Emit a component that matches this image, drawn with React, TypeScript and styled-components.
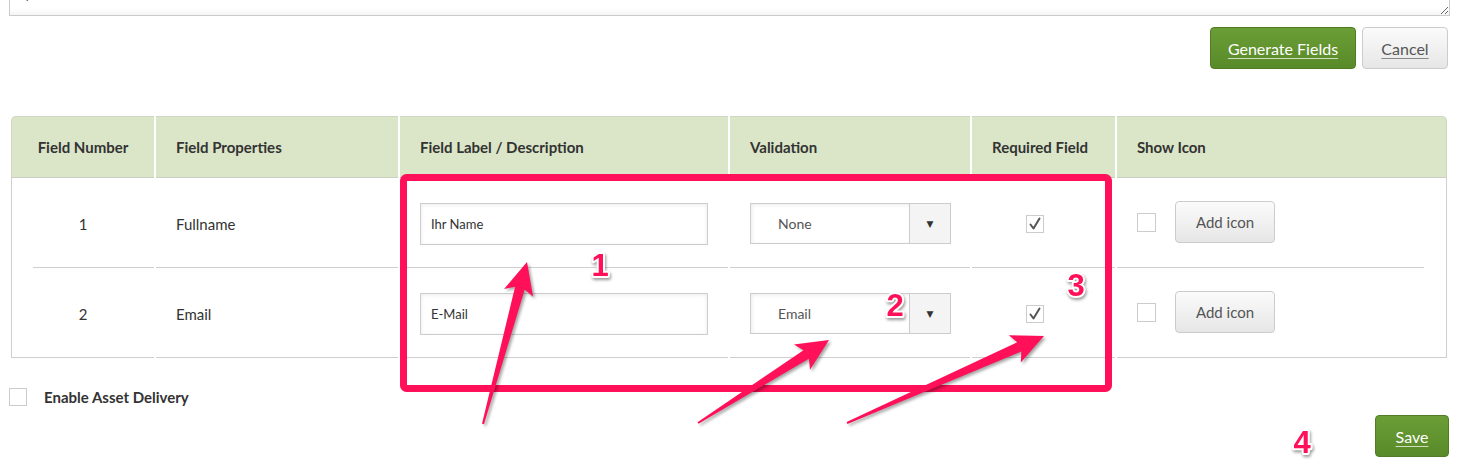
import styled, { createGlobalStyle } from 'styled-components';

/* Styles */
const GlobalStyle = createGlobalStyle`
  body {
    margin: 0;
    background: #fff;
    font-family: Lato, 'Open Sans', sans-serif;
    color: #333;
  }
`;

const Page = styled.div`
  position: relative;
  width: 1461px;
  height: 469px;
  overflow: hidden;
  padding: 0 11px 0 9px;
  box-sizing: border-box;
`;

const Textarea = styled.textarea`
  display: block;
  width: 100%;
  height: 40px;
  margin-top: -24px;
  box-sizing: border-box;
  border: 1px solid #ccc;
  box-shadow: inset 0 -6px 6px -4px rgba(0, 0, 0, 0.06);
  padding: 8px 16px;
  font: 15px/18px Lato, sans-serif;
  color: #333;
  resize: vertical;
  overflow: hidden;
`;

const Actions = styled.div`
  display: flex;
  justify-content: flex-end;
  gap: 6px;
  margin-top: 11px;
  padding-right: 2px;
`;

const PrimaryButton = styled.button<{ $width: number }>`
  width: ${(p) => p.$width}px;
  height: 42px;
  border: 1px solid #4f7c24;
  border-radius: 4px;
  background: linear-gradient(#6b9e36, #588a29);
  color: #fff;
  font: 16px Lato, sans-serif;
  text-decoration: underline;
  text-decoration-color: rgba(255, 255, 255, 0.7);
  text-underline-offset: 3px;
  cursor: pointer;
`;

const DefaultButton = styled.button<{ $width: number; $size?: number }>`
  width: ${(p) => p.$width}px;
  height: 42px;
  border: 1px solid #ccc;
  border-radius: 4px;
  background: linear-gradient(#fbfbfb, #e6e6e6);
  color: #555;
  font: ${(p) => p.$size || 15}px Lato, sans-serif;
  cursor: pointer;
`;

const CancelButton = styled(DefaultButton)`
  text-decoration: underline;
  text-decoration-color: #888;
  text-underline-offset: 3px;
`;

const FieldsTable = styled.div`
  display: grid;
  grid-template-columns: 143px 242px 328px 240px 143px 330px;
  column-gap: 2px;
  margin: 47px 3px 0 2px;
`;

const HeadCell = styled.div<{ $center?: boolean }>`
  height: 62px;
  box-sizing: border-box;
  display: flex;
  align-items: center;
  justify-content: ${(p) => (p.$center ? 'center' : 'flex-start')};
  padding-left: ${(p) => (p.$center ? 0 : 20)}px;
  background: #dbe6c8;
  border-top: 1px solid #cfd6c4;
  border-bottom: 1px solid #c9d0bf;
  font-size: 15px;
  font-weight: 700;
  color: #333;

  &:first-child {
    border-left: 1px solid #cfd6c4;
    border-top-left-radius: 5px;
  }

  &:nth-child(6) {
    border-right: 1px solid #cfd6c4;
    border-top-right-radius: 5px;
  }
`;

const BodyCell = styled.div<{ $center?: boolean; $pad?: number; $inset?: 'left' | 'right' }>`
  height: 90px;
  box-sizing: border-box;
  display: flex;
  align-items: center;
  justify-content: ${(p) => (p.$center ? 'center' : 'flex-start')};
  padding-left: ${(p) => p.$pad ?? 20}px;
  padding-top: 1px;
  font-size: 15px;
  color: #333;
  background: linear-gradient(#cfcfcf, #cfcfcf) no-repeat;
  background-position: ${(p) => (p.$inset === 'right' ? 'left bottom' : 'right bottom')};
  background-size: ${(p) => (p.$inset === 'left' ? 'calc(100% - 21px)' : p.$inset === 'right' ? 'calc(100% - 22px)' : '100%')} 1px;
`;

const FirstCell = styled(BodyCell)`
  border-left: 1px solid #cfcfcf;
`;

const LastCell = styled(BodyCell)`
  border-right: 1px solid #cfcfcf;
  gap: 19px;
  padding-top: 0;
  padding-bottom: 2px;
`;

const TextInput = styled.input`
  width: 288px;
  height: 42px;
  box-sizing: border-box;
  border: 1px solid #ccc;
  box-shadow: inset 0 1px 4px rgba(0, 0, 0, 0.08);
  padding: 0 10px;
  font: 13px Lato, sans-serif;
  color: #333;
  outline: none;
`;

const SelectBox = styled.div`
  width: 201px;
  height: 41px;
  box-sizing: border-box;
  display: flex;
  border: 1px solid #ccc;
  box-shadow: inset 1px 1px 4px rgba(0, 0, 0, 0.08);
`;

const SelectValue = styled.div`
  flex: 1;
  display: flex;
  align-items: center;
  padding-left: 27px;
  font-size: 14px;
  color: #555;
`;

const SelectArrow = styled.div`
  width: 40px;
  display: flex;
  align-items: center;
  justify-content: center;
  background: #f4f4f4;
  border-left: 1px solid #ccc;
  font: 9px 'DejaVu Sans', sans-serif;
  color: #333;
`;

const Box = styled.span<{ $size?: number }>`
  width: ${(p) => p.$size || 18}px;
  height: ${(p) => p.$size || 18}px;
  box-sizing: border-box;
  display: inline-flex;
  align-items: center;
  justify-content: center;
  border: 1px solid #ccc;
  background: #fff;
`;

const AssetRow = styled.div`
  display: flex;
  align-items: center;
  gap: 17px;
  margin-top: 30px;
  font-size: 15px;
  font-weight: 700;
  color: #333;
`;

const SaveRow = styled.div`
  display: flex;
  justify-content: flex-end;
  margin-top: 9px;
  padding-right: 1px;
`;

const Overlay = styled.svg`
  position: absolute;
  left: 0;
  top: 0;
  pointer-events: none;
  overflow: visible;
`;

const Marker = styled.text`
  font: 700 31px 'Liberation Sans', Arial, sans-serif;
  fill: #ff1059;
  stroke: #fff;
  stroke-width: 4px;
  stroke-linejoin: round;
  paint-order: stroke;
  text-anchor: middle;
  filter: drop-shadow(1px 2px 1.5px rgba(0, 0, 0, 0.4));
`;

const PINK = '#ff1059';

const rows = [
  { id: 1, prop: 'Fullname', label: 'Ihr Name', validation: 'None' },
  { id: 2, prop: 'Email', label: 'E-Mail', validation: 'Email' },
];

const arrows = [
  { tail: [483, 424], tip: [527, 262] },
  { tail: [698, 423], tip: [829, 340] },
  { tail: [847, 423], tip: [1044, 336] },
];

function arrowPoints(tail: number[], tip: number[]) {
  const [tx, ty] = tail;
  const [px, py] = tip;
  const len = Math.hypot(px - tx, py - ty);
  const ux = (px - tx) / len;
  const uy = (py - ty) / len;
  const nx = -uy;
  const ny = ux;
  const headLen = 30;
  const headHalf = 15;
  const shaftHalf = 5;
  const tailHalf = 1;
  const bx = px - ux * headLen;
  const by = py - uy * headLen;
  const pts = [
    [tx + nx * tailHalf, ty + ny * tailHalf],
    [bx + ux * 3 + nx * shaftHalf, by + uy * 3 + ny * shaftHalf],
    [bx - ux * 2 + nx * headHalf, by - uy * 2 + ny * headHalf],
    [px, py],
    [bx - ux * 2 - nx * headHalf, by - uy * 2 - ny * headHalf],
    [bx + ux * 3 - nx * shaftHalf, by + uy * 3 - ny * shaftHalf],
    [tx - nx * tailHalf, ty - ny * tailHalf],
  ];
  return pts.map((p) => p[0].toFixed(1) + ',' + p[1].toFixed(1)).join(' ');
}

function Check() {
  return (
    <svg width="14" height="14" viewBox="0 0 14 14">
      <path d="M2.5 7.5 L5.5 11.5 L11.5 1.5" fill="none" stroke="#555" strokeWidth="2" strokeLinecap="round" strokeLinejoin="round" />
    </svg>
  );
}

function Annotations() {
  return (
    <Overlay width="1461" height="469">
      <rect x="403.5" y="177.5" width="705" height="211" rx="3" fill="none" stroke={PINK} strokeWidth="7" />
      <g style={{ filter: 'drop-shadow(2px 2px 1.5px rgba(0,0,0,0.35))' }}>
        {arrows.map((a, i) => (
          <polygon key={i} points={arrowPoints(a.tail, a.tip)} fill={PINK} strokeLinejoin="round" />
        ))}
      </g>
      <Marker x="600" y="276">1</Marker>
      <Marker x="895" y="316">2</Marker>
      <Marker x="1076" y="296">3</Marker>
      <Marker x="1302" y="453">4</Marker>
    </Overlay>
  );
}

function App() {
  return (
    <Page>
      <GlobalStyle />
      <Textarea readOnly defaultValue={'/form'} />
      <Actions>
        <PrimaryButton $width={146}>Generate Fields</PrimaryButton>
        <CancelButton $width={86} $size={16}>Cancel</CancelButton>
      </Actions>

      <FieldsTable>
        <HeadCell $center>Field Number</HeadCell>
        <HeadCell>Field Properties</HeadCell>
        <HeadCell>Field Label / Description</HeadCell>
        <HeadCell>Validation</HeadCell>
        <HeadCell>Required Field</HeadCell>
        <HeadCell>Show Icon</HeadCell>

        {rows.map((row, i) => {
          const inset = i === 0;
          return [
            <FirstCell key={row.id + 'n'} $center $pad={0} $inset={inset ? 'left' : undefined}>
              {row.id}
            </FirstCell>,
            <BodyCell key={row.id + 'p'}>{row.prop}</BodyCell>,
            <BodyCell key={row.id + 'l'}>
              <TextInput readOnly value={row.label} />
            </BodyCell>,
            <BodyCell key={row.id + 'v'}>
              <SelectBox>
                <SelectValue>{row.validation}</SelectValue>
                <SelectArrow>▼</SelectArrow>
              </SelectBox>
            </BodyCell>,
            <BodyCell key={row.id + 'r'} $pad={54}>
              <Box>
                <Check />
              </Box>
            </BodyCell>,
            <LastCell key={row.id + 's'} $inset={inset ? 'right' : undefined}>
              <Box $size={19} />
              <DefaultButton $width={100}>Add icon</DefaultButton>
            </LastCell>,
          ];
        })}
      </FieldsTable>

      <AssetRow>
        <Box />
        Enable Asset Delivery
      </AssetRow>
      <SaveRow>
        <PrimaryButton $width={74}>Save</PrimaryButton>
      </SaveRow>

      <Annotations />
    </Page>
  );
}

export default App;
